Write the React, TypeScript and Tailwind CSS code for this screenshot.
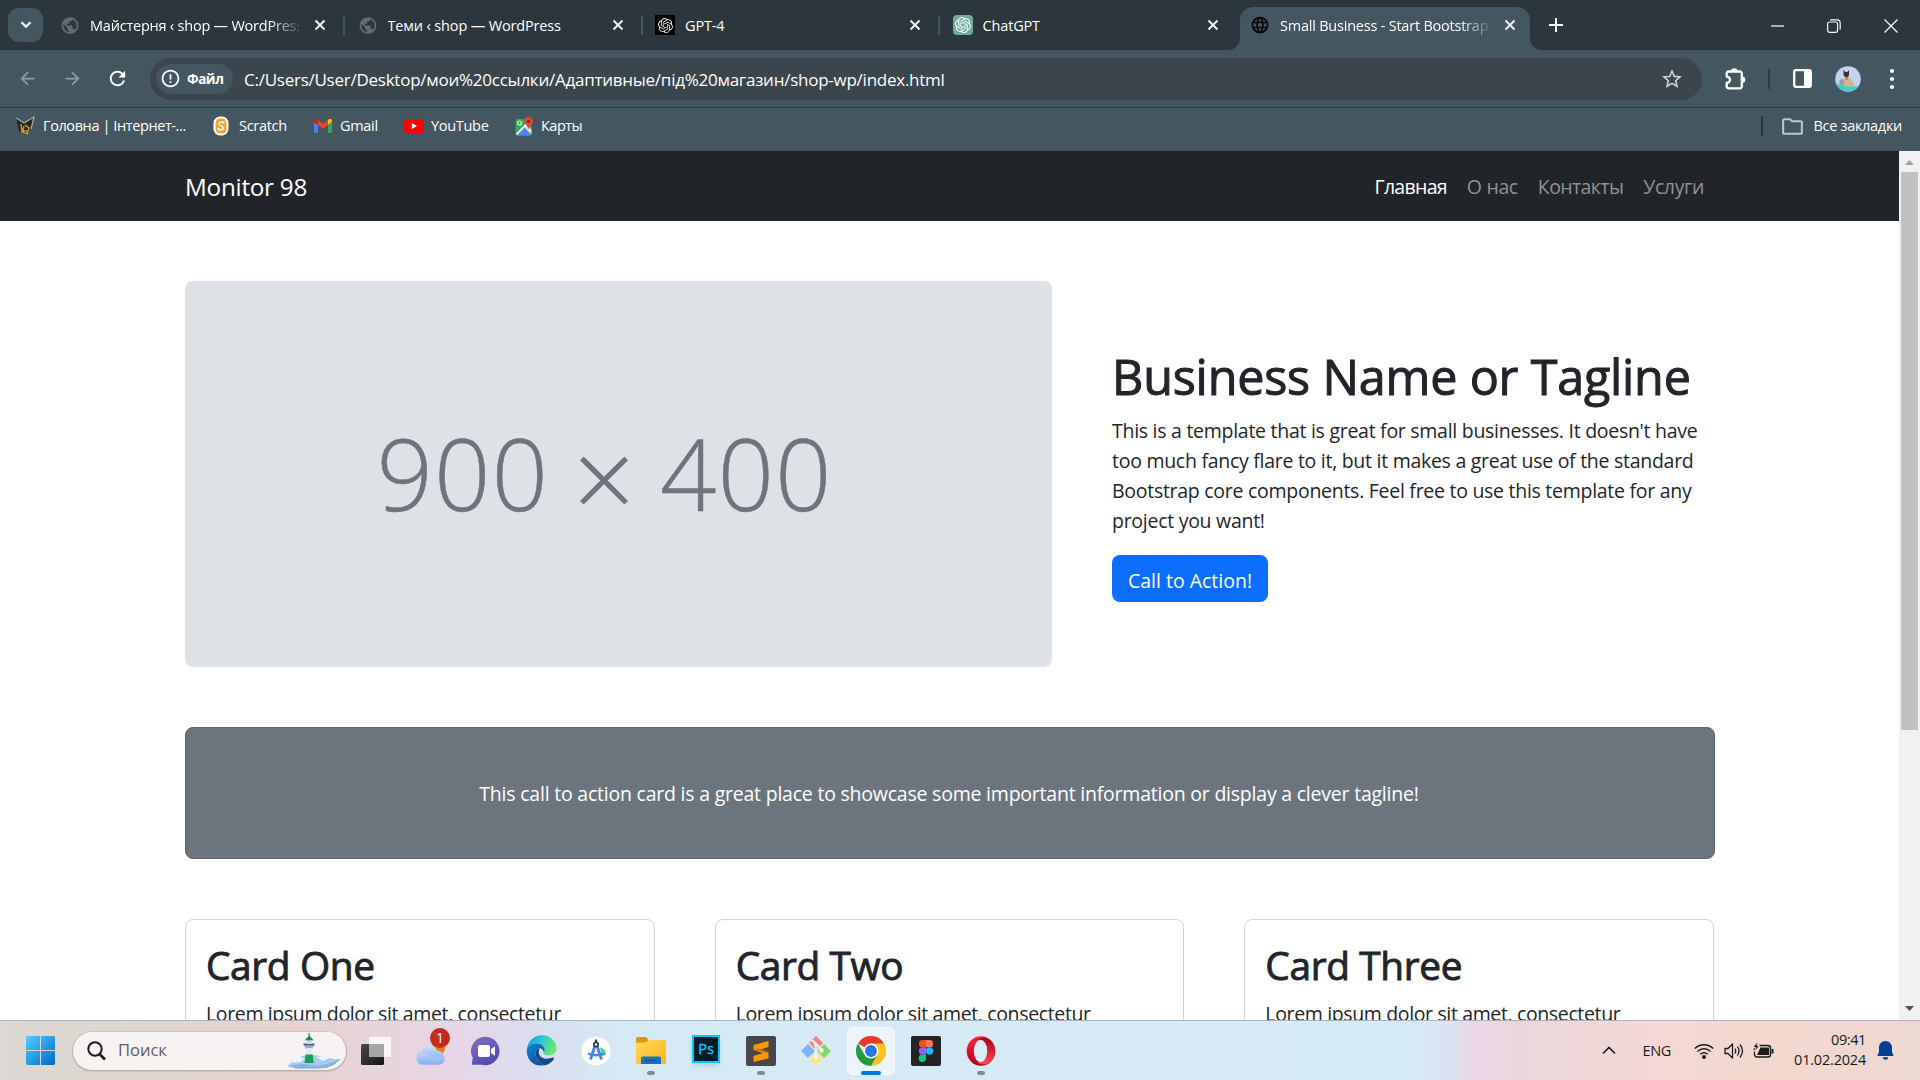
import type { ReactNode } from "react";
import { SiOpenai } from "react-icons/si";
import { MdStarBorder, MdArrowBack, MdArrowForward, MdRefresh, MdOutlineInfo, MdPublic, MdOutlineFolder, MdLanguage } from "react-icons/md";

/* ---------- browser tabs ---------- */

function CloseX() {
  return (
    <svg width="12" height="12" viewBox="0 0 12 12" fill="none" stroke="#eef1f2" strokeWidth="2">
      <path d="M1.5 1.5l9 9M10.5 1.5l-9 9" />
    </svg>
  );
}

function Tab({ icon, title, active = false, last = false, fade = false }: { icon: ReactNode; title: string; active?: boolean; last?: boolean; fade?: boolean }) {
  return (
    <div className="flex w-[297.5px] shrink-0 items-end">
      <div className={active ? "relative flex h-[43px] w-[290px] items-center rounded-t-[13px] bg-[#44565f] pb-[7px]" : "flex h-[43px] w-[290px] items-center pb-[7px]"}>
        {active && (
          <>
            <svg className="absolute bottom-0 -left-3" width="12" height="12">
              <path d="M12 0v12H0A12 12 0 0 0 12 0z" fill="#44565f" />
            </svg>
            <svg className="absolute -right-3 bottom-0" width="12" height="12">
              <path d="M0 0v12h12A12 12 0 0 1 0 0z" fill="#44565f" />
            </svg>
          </>
        )}
        <div className="ml-2.5 flex w-5 shrink-0 justify-center">{icon}</div>
        <div
          className={
            fade
              ? "ml-2.5 w-[209px] overflow-hidden pt-0.5 text-[14.5px] tracking-[-0.22px] whitespace-nowrap text-white [mask-image:linear-gradient(to_right,black_86%,transparent_102%)]"
              : "ml-2.5 w-[209px] overflow-hidden pt-0.5 text-[14.5px] tracking-[-0.15px] whitespace-nowrap text-white"
          }
        >
          {title}
        </div>
        <div className="ml-[15px]">
          <CloseX />
        </div>
      </div>
      {!active && !last && <div className="mb-[15px] ml-[3px] h-5 w-[2px] rounded bg-[#44565f]" />}
    </div>
  );
}

function TabStrip() {
  const grayGlobe = <MdPublic size={21} color="#676b70" />;
  return (
    <div className="flex h-[50px] items-end bg-[#2c373d]">
      <div className="mb-2 ml-2 flex h-[34px] w-[35px] items-center justify-center rounded-[11px] bg-[#44565f]">
        <svg width="12" height="8" viewBox="0 0 12 8" fill="none" stroke="#fff" strokeWidth="2.2">
          <path d="M1.5 1.3L6 5.8l4.500-4.500" />
        </svg>
      </div>
      <div className="ml-[7px] flex">
        <Tab icon={grayGlobe} title="Майстерня ‹ shop — WordPress" fade />
        <Tab icon={grayGlobe} title="Теми ‹ shop — WordPress" />
        <Tab
          icon={
            <div className="flex size-5 items-center justify-center bg-black">
              <SiOpenai size={15} color="#e4e4e4" />
            </div>
          }
          title="GPT-4"
        />
        <Tab
          icon={
            <div className="flex size-5 items-center justify-center rounded bg-[#74aa9c]">
              <SiOpenai size={16} color="#fff" />
            </div>
          }
          title="ChatGPT"
          last
        />
        <Tab icon={<MdLanguage size={22} color="#050708" />} title="Small Business - Start Bootstrap Template" active fade />
      </div>
      <svg className="mb-[18px] ml-[11px]" width="14" height="14" viewBox="0 0 14 14" stroke="#fff" strokeWidth="2">
        <path d="M7 0v14M0 7h14" />
      </svg>
      <div className="mb-[17px] ml-auto flex items-center">
        <svg width="13" height="14" stroke="#fff" strokeWidth="1.2">
          <path d="M0 7h13" />
        </svg>
        <svg className="ml-[43px]" width="14" height="14" viewBox="0 0 14 14" fill="none" stroke="#f2f4f5" strokeWidth="1.2">
          <rect x=".6" y="3" width="10" height="10.300" rx="2" />
          <path d="M3 .8h7a3.200 3.200 0 0 1 3.200 3.200v6.500" />
        </svg>
        <svg className="mr-[22px] ml-[43px]" width="14" height="14" viewBox="0 0 14 14" stroke="#fff" strokeWidth="1.2">
          <path d="M.5.5l13 13M13.500.5l-13 13" />
        </svg>
      </div>
    </div>
  );
}

/* ---------- toolbar and bookmarks ---------- */

function PuzzleIcon() {
  return (
    <svg className="ml-[22px]" width="23" height="24" viewBox="0 0 23 24">
      <path
        d="M4.500 4.500H16a1.800 1.800 0 0 1 1.800 1.800V19.500a1.800 1.800 0 0 1-1.800 1.800H4.500a1.800 1.800 0 0 1-1.800-1.800V16q3.300-.4 3.300-3.200T2.700 9.600V6.300a1.800 1.800 0 0 1 1.800-1.800z"
        fill="none"
        stroke="#fff"
        strokeWidth="2.300"
        strokeLinejoin="round"
      />
      <path d="M7 4.500a3.200 3.200 0 0 1 6.400 0zM18 9.500a3.300 3.300 0 0 1 0 6.600z" fill="#fff" />
    </svg>
  );
}

function Avatar() {
  return (
    <svg width="26" height="26" viewBox="0 0 26 26">
      <defs>
        <clipPath id="avatar">
          <circle cx="13" cy="13" r="12.800" />
        </clipPath>
      </defs>
      <g clipPath="url(#avatar)">
        <rect width="26" height="26" fill="#c5d1ee" />
        <path d="M0 17.500l12 2 14 1.500v5H0z" fill="#41d0c8" />
        <path d="M4 15q3-4 6 0v4H5z" fill="#9a9db4" />
        <path d="M10 10h4l3 5q3 3 2 5.500l-9 .5q-2-5 0-11z" fill="#cdb98f" />
        <path d="M8.500 4l1.800 2h2L14 4v5l-1.500 2.500h-2L8.500 9z" fill="#3b3230" />
        <path d="M10.500 11h2.500v3h-2.500z" fill="#b08a5c" />
      </g>
    </svg>
  );
}

function Toolbar() {
  return (
    <div className="flex h-[57px] items-center bg-[#44565f]">
      <div className="flex w-[150px] items-center pl-[17px] text-[#8f9a9f]">
        <MdArrowBack size={21} />
        <MdArrowForward size={21} className="ml-6" />
        <MdRefresh size={23} color="#fff" className="ml-[23px]" />
      </div>
      <div className="flex h-[42px] w-[1552px] items-center rounded-full bg-[#3a454c] pl-1.5">
        <div className="flex h-[30px] w-[77px] items-center rounded-full bg-[#44565f] pl-1">
          <MdOutlineInfo size={21} color="#fff" className="rotate-180 -scale-x-100" />
          <span className="ml-1.5 pt-px text-[13.5px] font-bold tracking-[-0.45px] text-white">Файл</span>
        </div>
        <span className="ml-[11px] pt-0.5 text-[17px] tracking-[-0.25px] whitespace-pre text-white">C:/Users/User/Desktop/мои%20ссылки/Адаптивные/під%20магазин/shop-wp/index.html</span>
        <MdStarBorder size={24} color="#cfd3d5" className="mr-[18px] ml-auto" />
      </div>
      <PuzzleIcon />
      <div className="ml-[21px] h-5 w-[2px] bg-[#2f3b41]" />
      <svg className="ml-[23px]" width="19" height="19" viewBox="0 0 19 19">
        <rect x="1.200" y="1.200" width="16.600" height="16.600" rx="1.500" fill="none" stroke="#fff" strokeWidth="2.300" />
        <path d="M11 1h7v17h-7z" fill="#fff" />
      </svg>
      <div className="ml-[23px]">
        <Avatar />
      </div>
      <svg className="ml-[28px]" width="6" height="22" viewBox="0 0 6 22" fill="#fff">
        <circle cx="3" cy="3" r="2.100" />
        <circle cx="3" cy="11" r="2.100" />
        <circle cx="3" cy="19" r="2.100" />
      </svg>
    </div>
  );
}

const monitorIcon = (
  <svg className="shrink-0" width="20" height="20" viewBox="0 0 20 20">
    <path d="M1 2l8 5 10-6-3 12-6 6-6-4z" fill="#252525" />
    <path d="M1 2l8 5M9 7l10-6-3 12" fill="none" stroke="#a8adb0" strokeWidth="1.200" />
    <path d="M6 8l1 8 5 2 2-6-4-3M9 10l-1 5h4" fill="none" stroke="#d39b1d" strokeWidth="1.500" />
  </svg>
);

const scratchIcon = (
  <svg width="16" height="20" viewBox="0 0 16 20">
    <rect x=".5" y=".5" width="15" height="19" rx="6.500" fill="#fff" />
    <rect x="2.500" y="2.500" width="11" height="15" rx="4.500" fill="#f7a331" />
    <path d="M10.500 7.500V5.500M10.300 7.200C9.500 5.500 6 5.500 6 7.800c0 2.400 4.300 1.800 4.300 4.200 0 2.300-3.600 2.300-4.600.6M5.500 11.800v2.400" fill="none" stroke="#fff" strokeWidth="1.500" />
  </svg>
);

const gmailIcon = (
  <svg width="18" height="14" viewBox="0 0 18 14">
    <path d="M0 3v9.500A1.500 1.500 0 0 0 1.500 14H4V6z" fill="#4285f4" />
    <path d="M14 6v8h2.500a1.500 1.500 0 0 0 1.500-1.500V3z" fill="#34a853" />
    <path d="M14 1v5l4-3V2c0-2-2-2.700-3.300-1.700z" fill="#fbbc04" />
    <path d="M4 6V1l5 3.800L14 1v5L9 9.800z" fill="#ea4335" />
    <path d="M0 2v1l4 3V1L3.300.4C2-.6 0 0 0 2z" fill="#c5221f" />
  </svg>
);

const youtubeIcon = (
  <svg width="20" height="14" viewBox="0 0 20 14">
    <rect width="20" height="14" rx="3.200" fill="#f00" />
    <path d="M7.800 4l5.200 3-5.200 3z" fill="#fff" />
  </svg>
);

const mapsIcon = (
  <svg width="18" height="19" viewBox="0 0 18 19">
    <rect x=".5" y="2" width="16" height="16.500" rx="2" fill="#34a853" />
    <path d="M9 10.500l7.500 8H1z" fill="#4a89f3" />
    <path d="M1 16.500L15 2.500l1.500 1L2 18z" fill="#fff" />
    <path d="M9 10l7.500 7.500V13l-4-5z" fill="#e2e4e8" />
    <circle cx="4.500" cy="6" r="2" fill="none" stroke="#dff2e3" strokeWidth="1.200" />
    <path d="M13.500 0A4.300 4.300 0 0 0 9.300 4.300c0 2.700 3.200 3.900 4.200 8.200 1-4.300 4.300-5.500 4.300-8.200A4.300 4.300 0 0 0 13.500 0z" fill="#ea4335" />
    <circle cx="13.500" cy="4.300" r="1.500" fill="#8c1d18" />
  </svg>
);

function BookmarksBar() {
  return (
    <div className="flex h-[44px] items-center border-t border-[#27323a] bg-[#44565f] pb-[7px] text-[14.5px] tracking-[-0.3px] text-white">
      <div className="flex w-[190px] items-center gap-2 pl-[15px] tracking-[-0.4px]">
        {monitorIcon}
        <span className="whitespace-nowrap">Головна | Інтернет-...</span>
      </div>
      <div className="ml-[23px] flex w-[75px] items-center gap-2.5">
        {scratchIcon}
        <span>Scratch</span>
      </div>
      <div className="ml-[26px] flex w-[66px] items-center gap-2">
        {gmailIcon}
        <span>Gmail</span>
      </div>
      <div className="ml-6 flex w-[86px] items-center gap-[7px]">
        {youtubeIcon}
        <span>YouTube</span>
      </div>
      <div className="ml-[25px] flex items-center gap-2 tracking-[-0.5px]">
        {mapsIcon}
        <span>Карты</span>
      </div>
      <div className="ml-auto h-5 w-[2px] bg-[#2b363c]" />
      <MdOutlineFolder size={25} color="#bfc4c7" className="ml-[17px]" />
      <span className="mr-[18px] ml-2 tracking-[-0.3px]">Все закладки</span>
    </div>
  );
}

/* ---------- the web page ---------- */

function Card({ title }: { title: string }) {
  return (
    <div className="h-[300px] flex-1 rounded-lg border border-[#d2d3d4] p-5 pt-[21px]">
      <h2 className="mb-2.5 text-[38.8px] leading-[48px] tracking-[-0.35px] [-webkit-text-stroke:0.9px]">{title}</h2>
      <p className="text-[19.5px] leading-[30px] tracking-[-0.36px] whitespace-nowrap">Lorem ipsum dolor sit amet, consectetur</p>
    </div>
  );
}

function Page() {
  return (
    <div className="h-full flex-1 overflow-hidden bg-white text-[#212529]">
      <nav className="flex h-[70px] items-center justify-between bg-[#212529] pr-[195px] pl-[185px]">
        <span className="pt-0.5 text-[24.25px] tracking-[-0.25px] text-white">Monitor 98</span>
        <div className="flex gap-5 pt-0.5 text-[19.5px] text-[#909294]">
          <span className="tracking-[-0.7px] text-white">Главная</span>
          <span className="tracking-[-0.35px]">О нас</span>
          <span className="tracking-[-0.6px]">Контакты</span>
          <span className="tracking-[-0.4px]">Услуги</span>
        </div>
      </nav>
      <main className="w-[1715px] pt-[60px] pl-[185px]">
        <section className="flex items-center">
          <div className="flex h-[386px] w-[867px] items-center justify-center rounded-lg bg-[#dee2e6] pr-[28px] pb-1 text-[99px] leading-none font-light tracking-[1px] text-[#6c757d] [-webkit-text-stroke:0.5px]">
            <span className="whitespace-pre">
              900 <span className="inline-block translate-y-1 scale-110">×</span> 400
            </span>
          </div>
          <div className="ml-[60px] w-[603px]">
            <h1 className="mb-2.5 text-[48.5px] leading-[60px] tracking-[-0.2px] whitespace-nowrap [-webkit-text-stroke:1px]">Business Name or Tagline</h1>
            <p className="mb-[19px] text-[19.5px] leading-[30px] tracking-[-0.275px] whitespace-nowrap">
              This is a template that is great for small businesses. It doesn't have
              <br />
              too much fancy flare to it, but it makes a great use of the standard
              <br />
              Bootstrap core components. Feel free to use this template for any
              <br />
              project you want!
            </p>
            <button className="flex h-[47px] w-[156px] items-center justify-center rounded-lg bg-[#0d6efd] pt-1 text-[19.5px] text-white">Call to Action!</button>
          </div>
        </section>
        <section className="mt-[60px] flex h-[132px] items-center justify-center rounded-lg border border-[#5b636b] bg-[#6c757d] pt-0.5 pr-0.5 text-[19.5px] tracking-[-0.22px] text-white">
          This call to action card is a great place to showcase some important information or display a clever tagline!
        </section>
        <section className="mt-[60px] mr-px flex gap-[60px]">
          <Card title="Card One" />
          <Card title="Card Two" />
          <Card title="Card Three" />
        </section>
      </main>
    </div>
  );
}

function Scrollbar() {
  return (
    <div className="flex w-[21px] flex-col items-center bg-[#f1f1f1]">
      <svg width="21" height="21">
        <path d="M6 14l4.500-5 4.500 5z" fill="#a3a3a3" />
      </svg>
      <div className="h-[558px] w-[17px] bg-[#c1c1c1]" />
      <svg className="mt-auto" width="21" height="21">
        <path d="M6 7l4.500 5L15 7z" fill="#505050" />
      </svg>
    </div>
  );
}

/* ---------- taskbar ---------- */

function Slot({ children, dot = false, active = false }: { children: ReactNode; dot?: boolean; active?: boolean }) {
  return (
    <div className="flex w-[55px] justify-center">
      <div className={active ? "relative flex h-12 w-12 items-center justify-center rounded-md border border-white/60 bg-white/50" : "relative flex h-12 w-12 items-center justify-center"}>
        {children}
        {dot && <div className="absolute bottom-0 h-1 w-2 rounded-full bg-[#7f8b92]" />}
        {active && <div className="absolute -bottom-px h-1 w-5 rounded-full bg-[#0078d7]" />}
      </div>
    </div>
  );
}

function StartIcon() {
  return (
    <svg width="29" height="29" viewBox="0 0 30 30">
      <defs>
        <linearGradient id="start" x1="0" y1="0" x2="1" y2="1">
          <stop offset="0" stopColor="#4fd0ff" />
          <stop offset="1" stopColor="#0069c8" />
        </linearGradient>
      </defs>
      <path d="M1.500 0H14.500V14.500H0V1.500A1.500 1.500 0 0 1 1.500 0zM15.500 0h13A1.500 1.500 0 0 1 30 1.500v13H15.500zM0 15.500h14.500V30h-13A1.500 1.500 0 0 1 0 28.500zM15.500 15.500H30v13a1.500 1.500 0 0 1-1.500 1.500h-13z" fill="url(#start)" />
    </svg>
  );
}

function Lighthouse() {
  return (
    <svg width="56" height="36" viewBox="0 0 56 36">
      <path d="M1 33l5-4-1-2 8-2 3-2 8-1 5 0 9 2 6 1 3 1 8 0-6 5-8 4-12 1H11z" fill="#a9cbe8" />
      <path d="M5 27l8-3 3 1 3 0-4 4-8 1zM30 24l10-1 4 2-7 3z" fill="#eaf5fd" />
      <path d="M2 33l15-2 15 2 13-3 9-4-6 6-9 3H10z" fill="#85b3dd" />
      <path d="M17.500 10.500h11l-2 5h-7z" fill="#9eabc7" />
      <path d="M20.200 15h5.800l1.800 15h-9.400z" fill="#e3e9f1" />
      <path d="M19.500 21.500h7.200l1.100 8.500h-9.400z" fill="#16a05a" />
      <path d="M17.500 10.500h11v2h-11z" fill="#54648a" />
      <path d="M20.700 6.500h5V11h-5z" fill="#c9dbe8" />
      <path d="M18.700 7.200l4.500-4.600 4.500 4.600z" fill="#19895a" />
      <path d="M23.200 0v4" stroke="#19895a" strokeWidth="1.200" />
    </svg>
  );
}

function TaskViewIcon() {
  return (
    <svg width="30" height="30" viewBox="0 0 30 30">
      <defs>
        <linearGradient id="tv" x1="0" y1="0" x2="1" y2="1">
          <stop offset="0" stopColor="#484848" />
          <stop offset="1" stopColor="#161616" />
        </linearGradient>
      </defs>
      <rect x="0" y="8" width="23" height="21" rx="1.500" fill="url(#tv)" />
      <rect x="8" y="1" width="22" height="20" rx="1.500" fill="#fff" opacity=".82" />
      <path d="M8 8h15v13H8z" fill="#a6a6a6" />
    </svg>
  );
}

function WeatherIcon() {
  return (
    <div className="relative">
      <svg width="32" height="30" viewBox="0 0 32 30">
        <defs>
          <linearGradient id="cloud" x1="0" y1="0" x2="0" y2="1">
            <stop offset="0" stopColor="#d0e2fb" />
            <stop offset="1" stopColor="#6fa1e6" />
          </linearGradient>
          <linearGradient id="cloud-front" x1="0" y1="0" x2="0" y2="1">
            <stop offset="0" stopColor="#c3dafb" />
            <stop offset="1" stopColor="#8ab3ee" />
          </linearGradient>
        </defs>
        <circle cx="23" cy="12" r="7" fill="#ee7a1a" />
        <path d="M8 28.500a6.500 6.500 0 0 1-1-12.900A7.800 7.800 0 0 1 22 14.500a7.200 7.200 0 0 1 2.500 14z" fill="url(#cloud)" />
        <path d="M1.500 22.500A6.500 6.500 0 0 1 12 17.500q3.500.5 5 4 6.500-3 13 1-.5 6-6 6H8q-6 0-6.500-6z" fill="url(#cloud-front)" opacity=".8" />
      </svg>
      <div className="absolute -top-[8px] left-[15px] flex size-[20px] items-center justify-center rounded-full bg-[#c42b1c] text-sm text-white">1</div>
    </div>
  );
}

function ChatIcon() {
  return (
    <svg width="30" height="30" viewBox="0 0 30 30">
      <defs>
        <linearGradient id="chat" x1="0" y1="0" x2=".6" y2="1">
          <stop offset="0" stopColor="#8c6bb2" />
          <stop offset=".5" stopColor="#6b5cc0" />
          <stop offset="1" stopColor="#4f49b8" />
        </linearGradient>
      </defs>
      <path d="M15 .8A14.200 14.200 0 1 1 11 28.800H1.500q-1 0-.7-1l1-6A14.200 14.200 0 0 1 15 .8z" fill="url(#chat)" />
      <rect x="7" y="9" width="12" height="12" rx="2" fill="#fff" />
      <path d="M20 13l4-2.800v9.600L20 17z" fill="#fff" />
    </svg>
  );
}

function EdgeIcon() {
  return (
    <svg width="31" height="31" viewBox="0 0 256 256">
      <defs>
        <linearGradient id="e1" x1="0" y1="0" x2="1" y2=".3">
          <stop offset="0" stopColor="#1b90dc" />
          <stop offset=".5" stopColor="#2fc3dd" />
          <stop offset="1" stopColor="#66eb6e" />
        </linearGradient>
        <linearGradient id="e2" x1="0" y1="0" x2=".8" y2="1">
          <stop offset="0" stopColor="#1484d6" />
          <stop offset="1" stopColor="#0e4f9e" />
        </linearGradient>
      </defs>
      <path d="M8 120C14 50 68 3 130 3c74 0 122 52 122 104 0 40-32 62-64 62-30 0-44-10-44-18 0-6 10-8 10-26 0-26-26-46-56-46-44 0-76 22-90 41z" fill="url(#e1)" />
      <path d="M6 128C6 96 44 72 92 72c38 0 62 26 62 52 0 8-3 14-6 18-8-22-22-32-34-32-22 0-40 26-34 58 6 36 36 66 68 82C64 266 6 206 6 128z" fill="url(#e2)" />
      <path d="M80 168c-6-34 12-58 34-58-6 10-8 22-8 34 0 30 30 52 64 52 28 0 50-12 58-10 6 2 4 10 0 16-20 28-52 48-80 48-32-16-62-46-68-82z" fill="#114a8b" />
    </svg>
  );
}

function AndroidStudioIcon() {
  return (
    <svg width="30" height="30" viewBox="0 0 30 30">
      <circle cx="15" cy="15" r="14.500" fill="#fff" />
      <path d="M19 11.500a6.500 6.500 0 0 1 6 7.500l-4 1z" fill="#3ddc84" />
      <path d="M14 9.500L9.500 23.500M16 9.500l4.500 14" stroke="#4285f4" strokeWidth="2.800" />
      <path d="M7 17.500q8 3.500 16 0" fill="none" stroke="#4285f4" strokeWidth="2.300" />
      <circle cx="15" cy="8.500" r="2.200" fill="#fff" stroke="#263a4a" strokeWidth="1.700" />
      <path d="M15 3.500v3" stroke="#263a4a" strokeWidth="2" />
    </svg>
  );
}

function ExplorerIcon() {
  return (
    <svg width="32" height="28" viewBox="0 0 32 28">
      <defs>
        <linearGradient id="fo" x1="0" y1="0" x2="1" y2="1">
          <stop offset="0" stopColor="#ffd95e" />
          <stop offset="1" stopColor="#f8b517" />
        </linearGradient>
      </defs>
      <path d="M1 2a2 2 0 0 1 2-2h8l3 3.500V8H1z" fill="#dd9a06" />
      <path d="M1 5.500h9.500l3.500-2.500h15.500A1.500 1.500 0 0 1 31 4.500v21a1.500 1.500 0 0 1-1.500 1.500h-27A1.500 1.500 0 0 1 1 25.500z" fill="url(#fo)" />
      <path d="M6 27v-5.500a2 2 0 0 1 2-2h16a2 2 0 0 1 2 2V27z" fill="#1272c6" />
      <path d="M10 23.500h12" stroke="#0b4c93" strokeWidth="1.300" />
    </svg>
  );
}

function PhotoshopIcon() {
  return <div className="mb-1 flex h-[28px] w-7 items-center justify-center border-2 border-[#00c8ff] bg-[#001d26] text-[15px] leading-none font-medium text-[#00c8ff] shadow-md [-webkit-text-stroke:0.3px]">Ps</div>;
}

function SublimeIcon() {
  return (
    <svg width="30" height="30" viewBox="0 0 30 30">
      <rect width="30" height="30" rx="2" fill="#474747" />
      <path d="M22.500 5v6L13 14l9.500 3v5.500L7.500 26v-6l9.500-3-9.500-3V9z" fill="#ff9800" />
      <path d="M7.500 14l15 3v-1.500L12 12z" fill="#c96f00" opacity=".7" />
    </svg>
  );
}

function GitIcon() {
  return (
    <svg width="30" height="30" viewBox="0 0 30 30">
      <path d="M15 0l7 7-7 7-7-7z" fill="#f88080" />
      <path d="M7 8l7 7-7 7-7-7z" fill="#80b3ff" />
      <path d="M23 8l7 7-7 7-7-7z" fill="#8dd35f" />
      <path d="M15 16l7 7-7 7-7-7z" fill="#ffe680" />
      <path d="M11 4l10 10M15 8v14" stroke="#eef6fb" strokeWidth="1.800" />
      <circle cx="15" cy="9" r="2" fill="#eef6fb" />
      <circle cx="20.500" cy="14.500" r="2.200" fill="#eef6fb" />
      <circle cx="15" cy="21" r="2.200" fill="#eef6fb" />
    </svg>
  );
}

function ChromeIcon() {
  return (
    <svg width="30" height="30" viewBox="0 0 48 48">
      <path d="M24 24L3.200 12A24 24 0 0 1 44.800 12z" fill="#e33b2e" />
      <path d="M24 12h20.800A24 24 0 0 1 24 48l10.400-18z" fill="#fcc31e" />
      <path d="M3.200 12l10.400 18L34.400 30 24 48A24 24 0 0 1 3.200 12z" fill="#249a41" />
      <circle cx="24" cy="24" r="12" fill="#fff" />
      <circle cx="24" cy="24" r="9.500" fill="#2a74ea" />
    </svg>
  );
}

function FigmaIcon() {
  return (
    <svg width="30" height="30" viewBox="0 0 30 30">
      <rect width="30" height="30" rx="2" fill="#242424" />
      <path d="M11.500 4H15v7.300h-3.500a3.650 3.650 0 0 1 0-7.300z" fill="#f24e1e" />
      <path d="M15 4h3.500a3.650 3.650 0 0 1 0 7.300H15z" fill="#ff7262" />
      <path d="M11.500 11.300H15v7.300h-3.500a3.650 3.650 0 0 1 0-7.300z" fill="#a259ff" />
      <circle cx="18.600" cy="15" r="3.650" fill="#1abcfe" />
      <path d="M11.500 18.600H15v3.650a3.650 3.650 0 1 1-3.500-3.650z" fill="#0acf83" />
    </svg>
  );
}

function OperaIcon() {
  return (
    <svg width="30" height="30" viewBox="0 0 30 30">
      <defs>
        <linearGradient id="op" x1="0" y1="0" x2="0" y2="1">
          <stop offset="0" stopColor="#ff2438" />
          <stop offset="1" stopColor="#b3001b" />
        </linearGradient>
        <linearGradient id="op2" x1="0" y1="0" x2="0" y2="1">
          <stop offset="0" stopColor="#a80018" />
          <stop offset="1" stopColor="#ff4b4b" />
        </linearGradient>
      </defs>
      <ellipse cx="15" cy="15" rx="14.300" ry="14.800" fill="url(#op)" />
      <path d="M11 4Q18-1 24 4q5 4.500 5.300 11T24 26q-6 5-13 0 8 1 10-11Q19 3 11 4z" fill="url(#op2)" />
      <ellipse cx="14.500" cy="15" rx="6.700" ry="11.300" fill="#dbedf7" />
    </svg>
  );
}

function Tray() {
  return (
    <div className="ml-auto flex items-center text-[#1b1b1b]">
      <svg width="14" height="9" viewBox="0 0 14 9" fill="none" stroke="currentColor" strokeWidth="1.600">
        <path d="M1 7.500l6-6 6 6" />
      </svg>
      <span className="ml-[26px] text-[14.5px] tracking-[-0.33px]">ENG</span>
      <svg className="ml-[23px]" width="20" height="18" viewBox="0 0 20 18" fill="none" stroke="currentColor" strokeWidth="1.400">
        <path d="M.8 6.500a13 13 0 0 1 18.400 0M3.500 9.500a9.200 9.200 0 0 1 13 0M6.300 12.300a5.200 5.200 0 0 1 7.400 0" />
        <circle cx="10" cy="15" r="1.300" fill="currentColor" />
      </svg>
      <svg className="ml-2.5" width="20" height="18" viewBox="0 0 20 18" fill="none" stroke="currentColor" strokeWidth="1.300">
        <path d="M1 6.500h3l4.500-4.500v14L4 11.500H1z" strokeLinejoin="round" />
        <path d="M11 6.500q1.500 2.500 0 5M13.500 4.500q3 4.500 0 9M16 2.500q5 6.500 0 13" />
      </svg>
      <svg className="mb-0.5 ml-[9px]" width="21" height="18" viewBox="0 0 21 18">
        <rect x="1.500" y="4.500" width="16" height="11.500" rx="2.500" fill="none" stroke="currentColor" strokeWidth="1.400" />
        <path d="M7.500 6.500h8.500v7.500H4z" fill="currentColor" />
        <path d="M18.500 8h2v4.500h-2z" fill="currentColor" />
        <path d="M4.500 0L0 6.500h2.500L1.500 11l5-6.500H4z" fill="currentColor" stroke="#f3d8d3" strokeWidth="1" />
      </svg>
      <div className="mb-0.5 ml-5 w-[72px] text-right text-[14.5px] whitespace-nowrap">
        <div className="leading-5 tracking-[-0.4px]">09:41</div>
        <div className="leading-5 tracking-[-0.2px]">01.02.2024</div>
      </div>
      <svg className="mr-[26px] ml-[11px]" width="17" height="19" viewBox="0 0 17 19" fill="#003e92">
        <path d="M8.500 0C4.500 0 2 3 2 6.500V11L.3 15h16.400L15 11V6.500C15 3 12.500 0 8.500 0zM5.500 16.300h6q-.8 2.500-3 2.500t-3-2.500z" />
      </svg>
    </div>
  );
}

function Taskbar() {
  return (
    <div className="flex h-[60px] items-center border-t border-[#adb1ba] bg-[linear-gradient(90deg,#dcd8d3_0%,#dfd5d0_9%,#e7d2cd_15%,#e8d4dc_20%,#e7d6e8_24%,#dadff0_28%,#d6eaf6_33%,#d6ebf6_65%,#d5ebf9_73%,#d9e3f2_75.5%,#ebd8e7_76.7%,#ebd6dc_79%,#f3d8d5_86%,#f3d8cf_92%,#eed8d2_100%)]">
      <div className="ml-[26px]">
        <StartIcon />
      </div>
      <div className="ml-[18px] flex h-[38px] w-[273px] items-center rounded-full bg-[#f7f3f3] pl-3.5 shadow-[0_0_0_1px_rgba(120,100,100,0.16),0_1px_0_1px_rgba(120,110,110,0.2)]">
        <svg width="19" height="20" viewBox="0 0 19 20" fill="none" stroke="#1c1c1c" strokeWidth="2">
          <circle cx="8" cy="8" r="6.700" />
          <path d="M12.500 13l5.500 5.500" strokeWidth="2.600" />
        </svg>
        <span className="ml-3 text-[16.5px] text-[#5e5c5c]">Поиск</span>
        <div className="mr-[4px] ml-auto">
          <Lighthouse />
        </div>
      </div>
      <div className="ml-[2.5px] flex">
        <Slot><TaskViewIcon /></Slot>
        <Slot><WeatherIcon /></Slot>
        <Slot><ChatIcon /></Slot>
        <Slot><EdgeIcon /></Slot>
        <Slot><AndroidStudioIcon /></Slot>
        <Slot dot><ExplorerIcon /></Slot>
        <Slot><PhotoshopIcon /></Slot>
        <Slot dot><SublimeIcon /></Slot>
        <Slot><GitIcon /></Slot>
        <Slot active><ChromeIcon /></Slot>
        <Slot><FigmaIcon /></Slot>
        <Slot dot><OperaIcon /></Slot>
      </div>
      <Tray />
    </div>
  );
}

export default function App() {
  return (
    <div className="flex h-[1080px] w-[1920px] flex-col overflow-hidden bg-white font-['Open_Sans','Noto_Sans',sans-serif]">
      <TabStrip />
      <Toolbar />
      <BookmarksBar />
      <div className="flex h-[869px]">
        <Page />
        <Scrollbar />
      </div>
      <Taskbar />
    </div>
  );
}
